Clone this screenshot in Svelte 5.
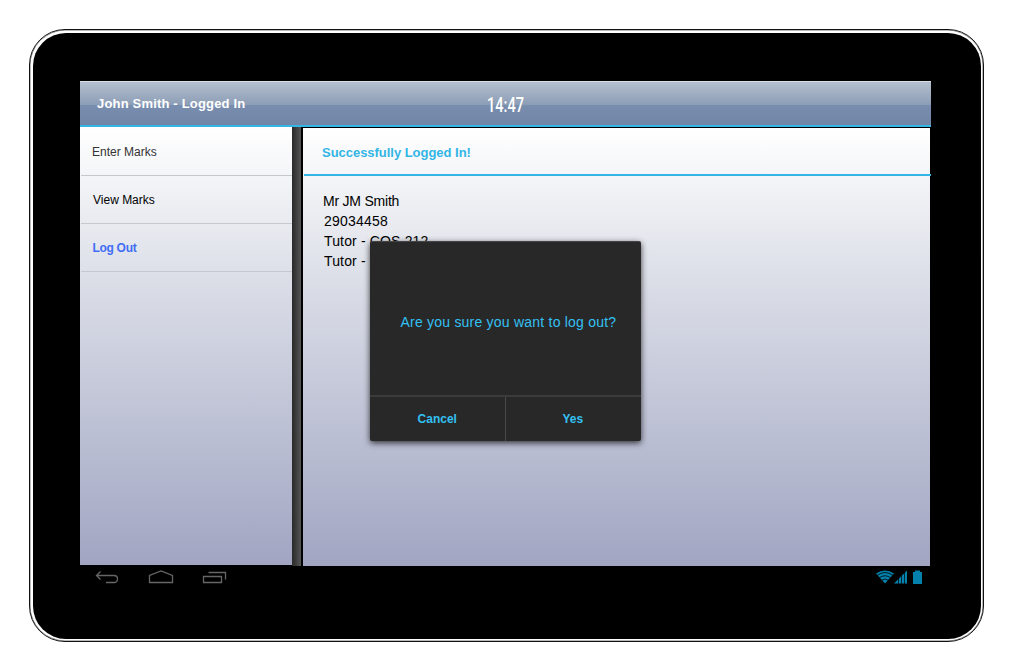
<script>
  const items = [
    { label: 'Enter Marks', kind: 'enter' },
    { label: 'View Marks', kind: 'view' },
    { label: 'Log Out', kind: 'logout' }
  ];
  const details = ['Mr JM Smith', '29034458', 'Tutor - COS 212', 'Tutor -'];
</script>

<main>
  <div class="tablet">
    <div class="bezel">
      <div class="screen">
        <header>
          <h1>John Smith - Logged In</h1>
          <time>14:47</time>
        </header>
        <div class="body">
          <nav>
            {#each items as item}
              <button class={item.kind}><span>{item.label}</span></button>
            {/each}
          </nav>
          <div class="divider"></div>
          <section>
            <h2><span>Successfully Logged In!</span></h2>
            <div class="details">
              {#each details as line, i}
                <p class:number={i === 1} class:role={i > 1}>{line}</p>
              {/each}
            </div>
          </section>
        </div>
        <div class="dialog">
          <p><span>Are you sure you want to log out?</span></p>
          <div class="actions">
            <button><span>Cancel</span></button>
            <button><span>Yes</span></button>
          </div>
        </div>
      </div>
      <footer>
        <svg class="keys" width="150" height="24" viewBox="0 0 150 24" fill="none" stroke="#666" stroke-width="1.3">
          <path d="M20.500 5.500 L16.500 9.500 L20.500 13.500 M17 9.500 H34 Q37.500 9.500 37.500 13 Q37.500 16.500 34 16.500 H26" />
          <path d="M69.500 16.500 V9.500 L81 5 L92.500 9.500 V16.500 Z" />
          <path d="M123.500 10.500 H141.500 V16.500 H123.500 Z M128.500 6.500 H145.500 V13.500" />
        </svg>
        <svg class="status" width="50" height="24" viewBox="1 1 50 24" fill="#0480ac">
          <path d="M-4 8.500 Q5 2.500 14 8.500 L5 18.500 Z" />
          <path d="M-3 10.500 Q5 4.500 13 10.500 M-1 13 Q5 8.500 11 13 M1 15.500 Q5 12.500 9 15.500" fill="none" stroke="#000" stroke-width=".8" />
          <path d="M14 18.500 L27 5.500 V18.500 Z" />
          <path d="M18.500 5 V19 M21.500 5 V19 M24.500 5 V19" stroke="#000" stroke-width=".7" />
          <path d="M33 7 h2 v-1.500 h5 v1.500 h2 v12 h-9 Z" />
        </svg>
      </footer>
    </div>
  </div>
</main>

<style>
  :global(body) { background: #fff; }
  main, main * { box-sizing: border-box; }
  main {
    width: 1013px; height: 672px; padding: 29px 0 0 29px; overflow: hidden;
    font-family: "Liberation Sans", Arial, sans-serif;
  }
  h1, h2, p { margin: 0; }
  button { display: block; border: 0; background: none; padding: 0; font: inherit; }
  span { display: inline-block; }
  .tablet {
    width: 955px; height: 613px; padding: 3px 2px 2px 3px; border: 1px solid #111;
    border-radius: 36px; box-shadow: inset 0 0 0 .5px #777;
  }
  .bezel { height: 100%; background: #000; border-radius: 33px; padding: 48px 0 0 47px; }
  .screen { position: relative; width: 851px; height: 485px; }
  header {
    height: 46px; display: flex; align-items: center;
    border-top: 1px solid #dcdfe8; border-bottom: 2px solid #33b5e5;
    background: linear-gradient(#b4bfce, #8c9db6 53%, #798eae 53%, #7186a6);
  }
  h1 { width: 407px; padding: 0 0 0 17px; color: #fff; font-size: 13px; line-height: 17px; letter-spacing: .18px; }
  time {
    color: #fff; font: 500 20px/20px Roboto, sans-serif; transform: scaleX(.73);
    transform-origin: left; padding-top: 2px;
  }
  .body { display: flex; height: 439px; }
  nav { width: 212px; height: 438px; background: linear-gradient(#fff, #f3f4f7 12%, #dcdfe8 34%, #a1a5c2); }
  nav button {
    width: 211px; height: 48px; margin-left: 1px; border-bottom: 1px solid #c7c8cd;
    text-align: left; padding: 0 0 0 11px; font-size: 12px;
  }
  nav button:first-child { height: 49px; padding-top: 2px; color: #333; }
  nav .view { color: #000; padding-left: 12px; }
  nav .logout { font-weight: bold; color: #3f6df5; padding-left: 11.500px; letter-spacing: -.3px; }
  .divider { width: 9px; background: linear-gradient(90deg, #292929, #555); }
  section {
    width: 627px; height: 438px; margin: 1px 0 0 2px;
    background: linear-gradient(#fff, #f3f4f7 12%, #dcdfe8 34%, #a1a5c2);
  }
  h2 {
    width: 627px; height: 48px; margin-left: 1px; padding: 17px 0 0 18px; border-bottom: 2px solid #33b5e5;
    color: #33b5e5; font-size: 13px; line-height: 16px; letter-spacing: -.03px;
  }
  .details { padding: 15px 0 0 20px; font-size: 14px; line-height: 20px; }
  .details p { letter-spacing: -.22px; }
  .details .number { padding-left: 1px; letter-spacing: .22px; }
  .details .role { padding-left: 1px; letter-spacing: .15px; }
  .dialog {
    position: absolute; left: 290px; top: 160px; width: 271px; height: 200px;
    background: #282828; border-radius: 2px; color: #33c0f3;
    border-top: 1px solid #454545; box-shadow: 0 2px 6px rgba(0, 0, 0, .75);
  }
  .dialog > p { height: 153px; padding: 71px 0 0 30.500px; font-size: 14px; line-height: 18px; letter-spacing: .22px; white-space: nowrap; }
  .actions { display: flex; height: 46px; border-top: 2px solid #3b3b3b; }
  .actions button { flex: 1; color: #33c0f3; font-size: 12px; font-weight: bold; }
  .actions button + button { border-left: 1px solid #4b4b4b; padding-right: 1px; }
  footer { width: 851px; height: 24px; display: flex; justify-content: space-between; }
  svg { display: block; overflow: visible; }
</style>
